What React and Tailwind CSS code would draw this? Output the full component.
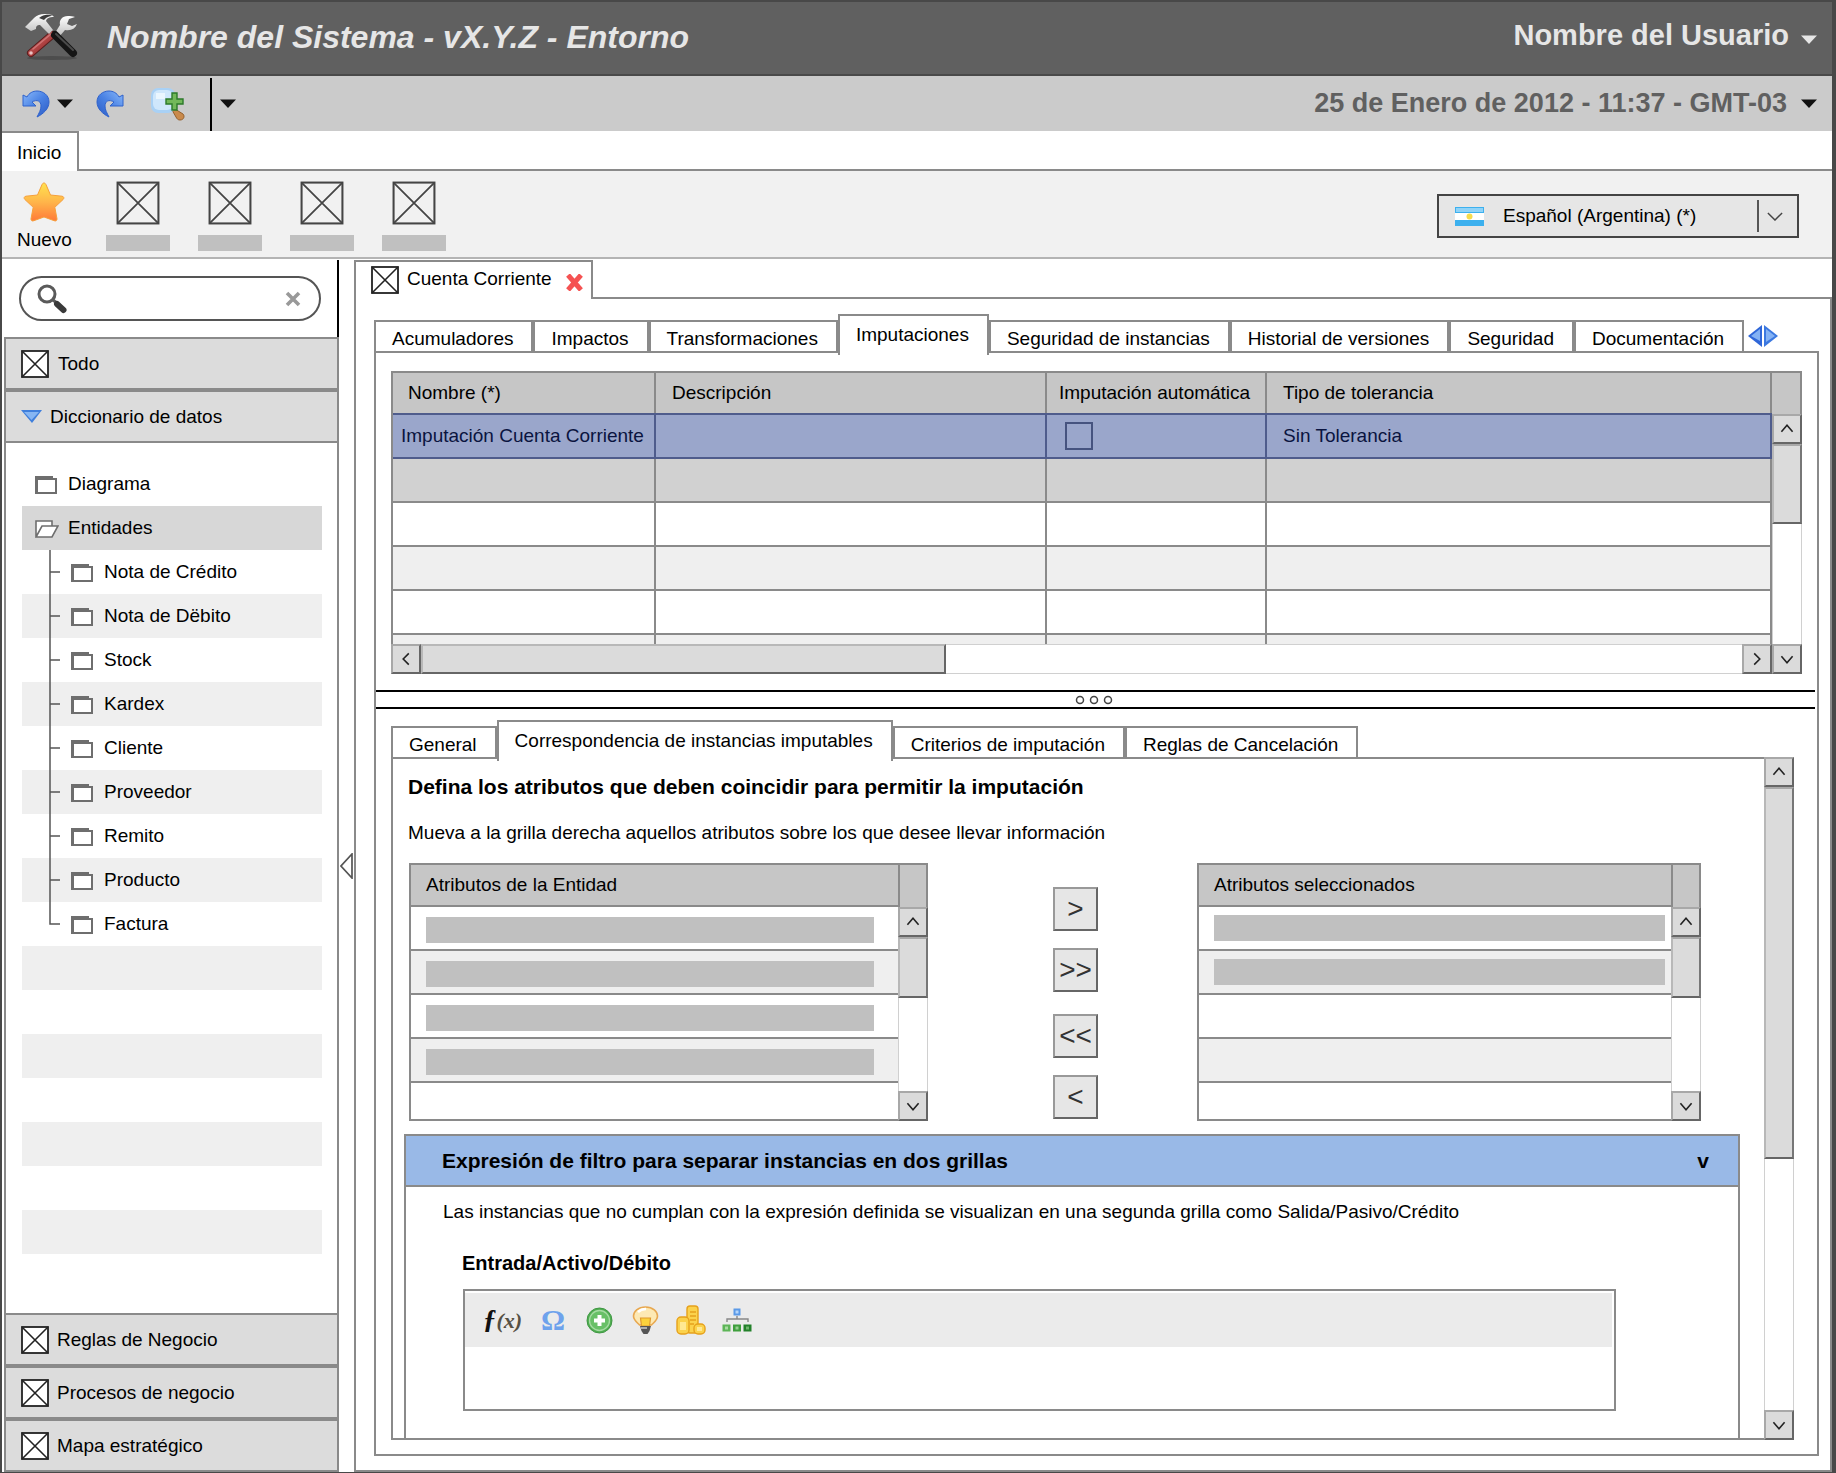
import React from "react";

const LINE = "border-[#8a8a8a]";

function CrossBox({ className = "size-7", stroke = "#222", thin = false }) {
  return (
    <svg className={`${className} shrink-0`} viewBox="0 0 28 28" aria-hidden="true">
      <rect x="1" y="1" width="26" height="26" fill={thin ? "none" : "#fff"} stroke={stroke} strokeWidth={thin ? 1.3 : 1.8} />
      <path d="M1 1 27 27M27 1 1 27" stroke={stroke} strokeWidth={thin ? 1.1 : 1.6} />
    </svg>
  );
}

function Caret({ fill = "#111", className = "" }) {
  return (
    <svg className={`h-[9px] w-4 shrink-0 ${className}`} viewBox="0 0 16 9" aria-hidden="true">
      <path d="M0 .5h16L8 9z" fill={fill} />
    </svg>
  );
}

function ToolsLogo() {
  return (
    <svg className="h-[50px] w-[54px] shrink-0" viewBox="0 0 54 50" aria-hidden="true">
      <defs>
        <linearGradient id="steel" x1="0" y1="0" x2="0" y2="1">
          <stop offset="0" stopColor="#ffffff" />
          <stop offset="1" stopColor="#bdbdbd" />
        </linearGradient>
        <linearGradient id="redGrip" x1="0" y1="0" x2="1" y2="1">
          <stop offset="0" stopColor="#d98080" />
          <stop offset=".5" stopColor="#b04343" />
          <stop offset="1" stopColor="#7c2222" />
        </linearGradient>
      </defs>
      <ellipse cx="27" cy="46" rx="25" ry="2" fill="#4d4d4d" />
      <path d="M43 4c-6 0-9 4-8 9l-5 8 4 4 6-7c6 1 10-1 12-6l-5 2-5-2 2-5 6-2c-2-1-5-1-7-1z" fill="url(#steel)" />
      <path d="M27 23 6 41" stroke="#5a1c1c" strokeWidth="8" strokeLinecap="round" />
      <path d="M27 23 6 41" stroke="url(#redGrip)" strokeWidth="6" strokeLinecap="round" />
      <path d="M26 22 8 37" stroke="#cf7474" strokeWidth="1.500" strokeLinecap="round" />
      <circle cx="6" cy="41" r="1.800" fill="#e9c3c3" />
      <path d="M30 23 48 41" stroke="#151515" strokeWidth="8" strokeLinecap="round" />
      <path d="M31 22 48 38" stroke="#4a4a4a" strokeWidth="2" strokeLinecap="round" />
      <path d="M0 15 9 6c4-4 10-5 18-3l2 2c-5 0-7 1-8 4l7 9-4 4-9-9c-3 0-4 1-4 4l-5 2z" fill="url(#steel)" />
      <path d="M14 6c5-4 9-4 14-2-5 0-7 2-9 4z" fill="#3c3c3c" />
    </svg>
  );
}

function TurnArrow({ flip = false }) {
  return (
    <svg className={`h-7 w-[29px] shrink-0 ${flip ? "-scale-x-100" : ""}`} viewBox="0 0 29 28" aria-hidden="true">
      <defs>
        <linearGradient id="arrowBlue" x1="0" y1="0" x2="1" y2="1">
          <stop offset="0" stopColor="#8ab9fa" />
          <stop offset=".5" stopColor="#4a82e4" />
          <stop offset="1" stopColor="#2c5bc4" />
        </linearGradient>
      </defs>
      <path
        d="M1 5v11h13l-4-4c5-3 9-1 9 4 0 4-2 7-4 11 6-3 12-8 12-15C27 5 21 1 15 1 11 1 7 3 5 7z"
        fill="url(#arrowBlue)"
        stroke="#2f62cc"
        strokeWidth="1"
        strokeLinejoin="round"
      />
    </svg>
  );
}

function ZoomAdd() {
  return (
    <svg className="h-[34px] w-[35px] shrink-0" viewBox="0 0 35 34" aria-hidden="true">
      <path d="M22 23l3-1 8 5c2 2 1 6-3 6-2 0-3-1-4-3z" fill="#c98a4c" stroke="#95602c" strokeWidth="1" />
      <rect x="1" y="1" width="24" height="25" rx="7" fill="#a9d1f5" />
      <rect x="3" y="3" width="20" height="20" rx="6" fill="#cfe7fc" />
      <path d="M6 6h9v6H6z" fill="#eaf6ff" />
      <path d="M22 6h5v6h6v5h-6v6h-5v-6h-6v-5h6z" fill="#72b85a" stroke="#2c7a2a" strokeWidth="1.400" />
    </svg>
  );
}

function StarIcon() {
  return (
    <svg className="h-[42px] w-[42px]" viewBox="0 0 42 42" aria-hidden="true">
      <defs>
        <linearGradient id="starFill" x1="0" y1="0" x2="0" y2="1">
          <stop offset="0" stopColor="#ffe34f" />
          <stop offset=".5" stopColor="#ffb54a" />
          <stop offset="1" stopColor="#ff7a38" />
        </linearGradient>
      </defs>
      <path
        d="M21 2c1 0 1.600.8 2 1.600L27.500 14l11.500 1.200c2 .3 2.400 2 1.100 3.300l-8.300 7.800 2.200 11.500c.2 1.700-1.300 2.700-2.800 1.900L21 36l-10.200 3.700c-1.500.8-3-.2-2.800-1.900l2.200-11.500-8.300-7.800C.6 17.200 1 15.500 3 15.200L14.500 14 19 3.600C19.400 2.800 20 2 21 2z"
        fill="url(#starFill)"
        stroke="#f6a03c"
        strokeWidth="1"
      />
    </svg>
  );
}

function Flag() {
  return (
    <svg className="h-[19px] w-[29px]" viewBox="0 0 29 19" aria-hidden="true">
      <rect width="29" height="19" fill="#3cb0ee" />
      <rect x="1" y="1" width="27" height="4" fill="#8fd3f8" />
      <rect y="6" width="29" height="7" fill="#fff" />
      <circle cx="14.500" cy="9.500" r="3" fill="#f6dc4c" />
    </svg>
  );
}

function FolderIcon() {
  return (
    <svg className="mt-[2px] h-[18px] w-[22px] shrink-0" viewBox="0 0 22 18" aria-hidden="true">
      <path d="M0 0h18v2h4v16H0z" fill="#6e6e6e" />
      <path d="M3 4h17v12H3z" fill="#fff" />
    </svg>
  );
}

function OpenFolderIcon() {
  return (
    <svg className="mt-[2px] h-[18px] w-6 shrink-0" viewBox="0 0 24 18" aria-hidden="true">
      <path d="M1 17V1h16v5M1 17 7 6h16l-6 11z" fill="#fff" stroke="#6e6e6e" strokeWidth="1.600" />
    </svg>
  );
}

function Branch({ last }) {
  return (
    <svg className="h-11 w-3 shrink-0" viewBox="0 0 12 44" aria-hidden="true">
      <path d={last ? "M1 0V22H11" : "M1 0V44M1 22H11"} fill="none" stroke="#555" strokeWidth="1.500" />
    </svg>
  );
}

const CHEVRONS = {
  up: "M9 18l6-7 6 7",
  down: "M9 12l6 7 6-7",
  left: "M18 9l-6 6 6 6",
  right: "M12 9l6 6-6 6",
};

function ScrollButton({ dir, label }) {
  return (
    <button
      type="button"
      aria-label={label}
      className="size-[30px] shrink-0 border-2 border-t-[#a8a8a8] border-l-[#a8a8a8] border-r-[#666] border-b-[#666] bg-[#dbdbdb]"
    >
      <svg className="-m-px size-[28px]" viewBox="0 0 30 30" aria-hidden="true">
        <path d={CHEVRONS[dir]} fill="none" stroke="#222" strokeWidth="1.700" />
      </svg>
    </button>
  );
}

function VScroll({ thumb }) {
  return (
    <div className="flex min-h-0 flex-1 flex-col border-x border-[#d0d0d0] bg-white">
      <div className="-mx-px flex flex-1 flex-col">
        <ScrollButton dir="up" label="Subir" />
        <div className={`${thumb} border-2 border-t-[#a8a8a8] border-l-[#b8b8b8] border-r-[#777] border-b-[#666] bg-[#dbdbdb]`} />
        <div className="flex-1" />
        <ScrollButton dir="down" label="Bajar" />
      </div>
    </div>
  );
}

function Tabs({ items, active, children }) {
  return (
    <div role="tablist" className="relative z-10 flex h-[39px] items-end whitespace-nowrap">
      {items.map((t) => {
        const on = t === active;
        return (
          <button
            key={t}
            type="button"
            role="tab"
            aria-selected={on}
            className={
              on
                ? `-mb-[2px] flex h-[41px] items-start border-2 border-b-0 ${LINE} bg-white pt-[7px] pr-[18px] pl-4`
                : `flex h-[33px] items-end border-2 ${LINE} bg-white pr-[18px] pl-4`
            }
          >
            {t}
          </button>
        );
      })}
      {children}
    </div>
  );
}

const MAIN_TABS = [
  "Acumuladores",
  "Impactos",
  "Transformaciones",
  "Imputaciones",
  "Seguridad de instancias",
  "Historial de versiones",
  "Seguridad",
  "Documentación",
];
const SUB_TABS = ["General", "Correspondencia de instancias imputables", "Criterios de imputación", "Reglas de Cancelación"];
const ENTITIES = ["Nota de Crédito", "Nota de Dëbito", "Stock", "Kardex", "Cliente", "Proveedor", "Remito", "Producto", "Factura"];

function Header() {
  return (
    <header className="flex h-[74px] items-center border-b-2 border-[#4a4a4a] bg-[#606060] pr-[15px] pb-[2px] pl-[23px] text-[#e6e6e6]">
      <ToolsLogo />
      <h1 className="ml-7 text-[32px] leading-9 font-bold italic">Nombre del Sistema - vX.Y.Z - Entorno</h1>
      <button type="button" className="mb-1 ml-auto flex items-center gap-3 text-[29px] leading-8 font-bold">
        Nombre del Usuario
        <Caret fill="#e6e6e6" className="mt-[9px]" />
      </button>
    </header>
  );
}

function QuickBar() {
  return (
    <div className="flex h-[55px] items-center bg-[#cbcbcb] pr-[15px] pl-5">
      <button type="button" aria-label="Deshacer" className="flex items-center gap-[6px]">
        <TurnArrow />
        <Caret />
      </button>
      <button type="button" aria-label="Rehacer" className="ml-[22px]">
        <TurnArrow flip />
      </button>
      <button type="button" aria-label="Buscar" className="ml-[26px]">
        <ZoomAdd />
      </button>
      <div className="ml-[25px] h-[53px] w-[2px] self-end bg-black" />
      <button type="button" aria-label="Más acciones" className="ml-2">
        <Caret />
      </button>
      <button type="button" className="ml-auto flex items-center gap-[14px] pb-[2px] text-[27px] leading-8 font-bold text-[#606060]">
        25 de Enero de 2012 - 11:37 - GMT-03
        <Caret className="mt-[2px]" />
      </button>
    </div>
  );
}

function Ribbon() {
  return (
    <>
      <div className={`flex h-10 items-end border-b-2 ${LINE}`}>
        <button type="button" className={`-mb-[2px] h-10 border-t-2 border-r-2 ${LINE} bg-white pt-px pr-4 pl-[15px]`}>
          Inicio
        </button>
      </div>
      <div className="flex h-[88px] items-center border-b-2 border-[#b4b4b4] bg-[#f1f1f1] pt-1 pr-[33px] pl-[15px]">
        <button type="button" className="flex flex-col items-center gap-[5px]">
          <StarIcon />
          Nuevo
        </button>
        <div className="ml-[34px] flex gap-7">
          {[1, 2, 3, 4].map((n) => (
            <button key={n} type="button" aria-label={`Acción ${n}`} className="flex flex-col items-center gap-[10px]">
              <CrossBox className="size-[44px]" stroke="#444" thin />
              <span className="h-4 w-16 bg-[#c0c0c0]" />
            </button>
          ))}
        </div>
        <div className="relative ml-auto">
          <select
            aria-label="Idioma"
            className="h-11 w-[362px] appearance-none border-2 border-[#444] bg-[#e6e6e6] pl-[64px]"
            defaultValue="es-AR"
          >
            <option value="es-AR">Español (Argentina) (*)</option>
          </select>
          <div className="pointer-events-none absolute inset-0 flex items-center pr-4 pl-[18px]">
            <Flag />
            <span className="ml-auto h-8 w-[2px] bg-[#555]" />
            <svg className="ml-2 h-[9px] w-[16px]" viewBox="0 0 18 10" aria-hidden="true">
              <path d="M1 1l8 8 8-8" fill="none" stroke="#444" strokeWidth="1.600" />
            </svg>
          </div>
        </div>
      </div>
    </>
  );
}

function SideSection({ label, icon, gap }) {
  return (
    <button type="button" className={`flex h-[53px] w-full items-center border-2 ${LINE} bg-[#dcdcdc] pl-[15px] ${gap}`}>
      {icon}
      {label}
    </button>
  );
}

function Sidebar() {
  return (
    <aside className="flex w-[335px] shrink-0 flex-col">
      <div className="flex h-[77px] items-center border-r-2 border-black pr-4 pl-[15px]">
        <label className="flex h-[45px] w-full items-center rounded-full border-2 border-[#555] bg-white px-4">
          <svg className="size-[30px] shrink-0" viewBox="0 0 30 30" aria-hidden="true">
            <circle cx="10" cy="10" r="8" fill="#fff" stroke="#5a5a5a" strokeWidth="3" />
            <path d="M16 16l5 4" stroke="#5a5a5a" strokeWidth="3" />
            <path d="M20 20l6.500 6" stroke="#3a3a3a" strokeWidth="6" strokeLinecap="round" />
          </svg>
          <input aria-label="Buscar" className="min-w-0 flex-1 bg-transparent px-2 outline-none" />
          <svg className="mr-[2px] size-4" viewBox="0 0 16 16" aria-hidden="true">
            <path d="M2 2l12 12M14 2 2 14" stroke="#999" strokeWidth="3.600" />
          </svg>
        </label>
      </div>
      <SideSection label="Todo" icon={<CrossBox />} gap="gap-[9px]" />
      <SideSection
        label="Diccionario de datos"
        gap="gap-2"
        icon={
          <svg className="h-[13px] w-[21px]" viewBox="0 0 21 13" aria-hidden="true">
            <path d="M0 0h21L11 13z" fill="#3f7fdc" />
            <path d="M3 2h15l-7.500 8z" fill="#86b6f3" />
          </svg>
        }
      />
      <nav className={`flex flex-1 flex-col border-x-2 ${LINE} pt-[19px] pr-[15px] pb-3 pl-4`}>
        <ul className="flex-1">
          <li className="flex h-11 items-center pl-[13px]">
            <FolderIcon />
            <a href="#diagrama" className="ml-[11px]">Diagrama</a>
          </li>
          <li>
            <div className="flex h-11 items-center bg-[#d7d7d7] pl-[13px]">
              <OpenFolderIcon />
              <a href="#entidades" className="ml-[9px]">Entidades</a>
            </div>
            <ul>
              {ENTITIES.map((e, i) => (
                <li key={e} className="flex h-11 items-center pl-[27px] even:bg-[#efefef]">
                  <Branch last={i === ENTITIES.length - 1} />
                  <span className="ml-[10px] flex items-center gap-[11px]">
                    <FolderIcon />
                    <a href={`#entidad-${i}`}>{e}</a>
                  </span>
                </li>
              ))}
            </ul>
          </li>
          {[0, 1, 2, 3].map((n) => (
            <li key={n} aria-hidden="true" className="mb-11 h-11 bg-[#efefef]" />
          ))}
        </ul>
      </nav>
      <SideSection label="Reglas de Negocio" icon={<CrossBox />} gap="gap-2" />
      <SideSection label="Procesos de negocio" icon={<CrossBox />} gap="gap-2" />
      <SideSection label="Mapa estratégico" icon={<CrossBox />} gap="gap-2" />
    </aside>
  );
}

function ImputTable() {
  const sel = "h-[46px] border-r-2 border-y-2 border-[#4f5c8c] bg-[#9aa6cb] text-[#0a1440]";
  const rows = ["h-11 bg-[#d1d1d1]", "h-11 bg-white", "h-11 bg-[#efefef]", "h-11 bg-white"];
  return (
    <div className="mx-[15px] mt-[18px]">
      <div className="flex">
        <div className={`min-w-0 flex-1 border-t-2 border-l-2 ${LINE}`}>
          <table className="w-full table-fixed border-separate border-spacing-0 text-left">
            <colgroup>
              <col className="w-[263px]" />
              <col className="w-[391px]" />
              <col className="w-[220px]" />
              <col />
            </colgroup>
            <thead>
              <tr className="h-10 bg-[#c6c6c6]">
                <th scope="col" className={`border-r-2 ${LINE} pl-[15px] font-normal`}>Nombre (*)</th>
                <th scope="col" className={`border-r-2 ${LINE} pl-4 font-normal`}>Descripción</th>
                <th scope="col" className={`border-r-2 ${LINE} pl-3 font-normal whitespace-nowrap`}>Imputación automática</th>
                <th scope="col" className={`border-r-2 ${LINE} pl-4 font-normal`}>Tipo de tolerancia</th>
              </tr>
            </thead>
            <tbody>
              <tr>
                <td className={`${sel} pl-2 whitespace-nowrap`}>Imputación Cuenta Corriente</td>
                <td className={sel} />
                <td className={`${sel} pl-[18px]`}>
                  <input
                    type="checkbox"
                    aria-label="Imputación automática"
                    className="block size-7 appearance-none border-2 border-[#46537f] bg-transparent"
                  />
                </td>
                <td className={`${sel} pl-4`}>Sin Tolerancia</td>
              </tr>
              {rows.map((r, i) => (
                <tr key={i} className={r}>
                  {[0, 1, 2, 3].map((c) => (
                    <td key={c} className={`border-r-2 border-b-2 ${LINE}`} />
                  ))}
                </tr>
              ))}
              <tr className="h-[9px] bg-[#efefef]">
                {[0, 1, 2, 3].map((c) => (
                  <td key={c} className={`border-r-2 ${LINE}`} />
                ))}
              </tr>
            </tbody>
          </table>
        </div>
        <div className="-mb-[30px] flex w-[30px] shrink-0 flex-col">
          <div className={`h-[43px] border-t-2 border-r-2 ${LINE} bg-[#c6c6c6]`} />
          <VScroll thumb="h-[80px]" />
        </div>
      </div>
      <div className="mr-[30px] flex h-[30px] border-y border-[#d0d0d0]">
        <div className="-my-px flex flex-1">
          <ScrollButton dir="left" label="Desplazar a la izquierda" />
          <div className="w-[38%] border-2 border-t-[#b8b8b8] border-l-[#b8b8b8] border-r-[#666] border-b-[#666] bg-[#dbdbdb]" />
          <div className="flex-1" />
          <ScrollButton dir="right" label="Desplazar a la derecha" />
        </div>
      </div>
    </div>
  );
}

function AttrGrid({ title, filled, bar }) {
  return (
    <div className={`flex border-2 border-r-0 ${LINE} bg-white`}>
      <table className="flex-1 border-separate border-spacing-0 text-left">
        <thead>
          <tr className="h-[42px] bg-[#c6c6c6]">
            <th scope="col" className={`w-full border-b-2 ${LINE} pl-[15px] font-normal`}>{title}</th>
          </tr>
        </thead>
        <tbody>
          {[0, 1, 2, 3].map((n) => (
            <tr key={n} className="h-11 even:bg-[#efefef]">
              <td className={`border-b-2 ${LINE} ${bar}`}>{n < filled && <div className="h-[26px] bg-[#c0c0c0]" />}</td>
            </tr>
          ))}
          <tr className="h-9">
            <td />
          </tr>
        </tbody>
      </table>
      <div className="-mb-[2px] flex w-[30px] flex-col">
        <div className={`h-[42px] border-r-2 border-l-2 ${LINE} bg-[#c6c6c6]`} />
        <VScroll thumb="h-[61px]" />
      </div>
    </div>
  );
}

function MoveButton({ children, label }) {
  return (
    <button
      type="button"
      aria-label={label}
      className="h-11 w-[45px] border-2 border-t-[#999] border-l-[#999] border-r-[#666] border-b-[#666] bg-[#e6e6e6] text-[28px] leading-9 text-[#333]"
    >
      {children}
    </button>
  );
}

function FormulaBar() {
  return (
    <div className="mt-[2px] mr-[2px] flex h-[54px] items-center gap-[18px] bg-[#ebebeb] pl-[18px]">
      <button type="button" aria-label="Función" className="w-[38px] text-left font-['Liberation_Serif',serif] text-[27px] leading-8 font-bold whitespace-nowrap text-[#111] italic">
        ƒ<span className="text-[22px] text-[#555044]">(x)</span>
      </button>
      <button type="button" aria-label="Símbolos" className="w-7 font-['Liberation_Serif',serif] text-[30px] leading-8 font-bold text-[#6ea2ec]">
        Ω
      </button>
      <button type="button" aria-label="Agregar" className="flex w-7 justify-center">
        <svg className="size-[27px]" viewBox="0 0 27 27" aria-hidden="true">
          <circle cx="13.500" cy="13.500" r="12.500" fill="#4fae50" stroke="#3f9643" strokeWidth="1" />
          <circle cx="13.500" cy="13.500" r="10" fill="#68c067" stroke="#a5dba2" strokeWidth="1.300" />
          <path d="M11.500 8h4v3.500H19v4h-3.500V19h-4v-3.500H8v-4h3.500z" fill="#fff" />
        </svg>
      </button>
      <button type="button" aria-label="Sugerencias" className="flex w-7 justify-center">
        <svg className="h-[29px] w-[27px]" viewBox="0 0 27 29" aria-hidden="true">
          <path d="M13.500 1C6 1 1.500 5.500 1.500 10c0 4 3 6 6 9h12c3-3 6-5 6-9 0-4.500-4.500-9-12-9z" fill="#fde9b4" stroke="#e8a850" strokeWidth="1.600" />
          <path d="M6 6c2-2 5-3 8-3" stroke="#fff" strokeWidth="2.500" fill="none" />
          <path d="M8.500 12h10l-1 8h-8z" fill="#fbd23c" stroke="#e09a2e" strokeWidth="1.200" />
          <path d="M8 20h11l-1.500 5-2 3h-4l-2-3z" fill="#555" />
          <path d="M9 22h6" stroke="#ccc" strokeWidth="1.500" />
        </svg>
      </button>
      <button type="button" aria-label="Moneda" className="flex w-7 justify-center">
        <svg className="size-[30px] shrink-0" viewBox="0 0 30 30" aria-hidden="true">
          <g fill="#fbd24c" stroke="#e6a11c" strokeWidth="1.400">
            <rect x="11" y="1" width="11" height="27" rx="3" />
            <rect x="1" y="12" width="12" height="17" rx="4" />
            <rect x="18" y="19" width="11" height="10" rx="4" />
          </g>
          <path d="M14 7h6M14 11h6M14 15h6M14 19h4" stroke="#e6a11c" strokeWidth="1.300" />
          <path d="M4 17h6v8H4zM21 22h5v4h-5z" fill="#ffe893" />
        </svg>
      </button>
      <button type="button" aria-label="Jerarquía" className="flex w-7 justify-center">
        <svg className="h-6 w-[30px] shrink-0" viewBox="0 0 30 24" aria-hidden="true">
          <path d="M5 14v-3h21v3M15 8v3" fill="none" stroke="#888" strokeWidth="1.400" />
          <rect x="11.500" y=".5" width="7" height="7" fill="#5b9ae8" />
          <rect x="13.500" y="2.500" width="3" height="3" fill="#b5d5fa" />
          <rect x=".5" y="16.500" width="8" height="7" fill="#5db557" />
          <rect x="3" y="18.500" width="3" height="3" fill="#a9dba2" />
          <rect x="11" y="16.500" width="8" height="7" fill="#3f9f3d" />
          <rect x="13.500" y="18.500" width="3" height="3" fill="#97cf92" />
          <rect x="21.500" y="16.500" width="8" height="7" fill="#23812a" />
          <rect x="24" y="18.500" width="3" height="3" fill="#6fb56c" />
        </svg>
      </button>
    </div>
  );
}

function FilterSection() {
  return (
    <section className={`mt-[13px] mr-6 ml-[11px] flex flex-1 flex-col border-2 border-b-0 ${LINE}`}>
      <button
        type="button"
        aria-expanded="true"
        className={`flex h-[51px] items-center justify-between border-b-2 ${LINE} bg-[#99b9e7] pr-[29px] pl-9 text-[21px] font-bold`}
      >
        <span>Expresión de filtro para separar instancias en dos grillas</span>
        <span>v</span>
      </button>
      <p className="mt-[13px] ml-[37px]">
        Las instancias que no cumplan con la expresión definida se visualizan en una segunda grilla como Salida/Pasivo/Crédito
      </p>
      <label htmlFor="entrada" className="mt-[27px] ml-14 text-[20px] font-bold">
        Entrada/Activo/Débito
      </label>
      <div className={`mt-[14px] mr-[122px] mb-[27px] ml-[57px] flex flex-1 flex-col border-2 ${LINE}`}>
        <FormulaBar />
        <textarea id="entrada" rows={2} className="block min-h-[62px] w-full flex-1 resize-none px-4 outline-none" />
      </div>
    </section>
  );
}

function DetailPanel() {
  return (
    <div className={`-mt-[2px] flex flex-1 border-2 border-r-0 ${LINE}`}>
      <div className="flex min-w-0 flex-1 flex-col">
        <h2 className="mt-4 ml-[15px] text-[21px] leading-6 font-bold">
          Defina los atributos que deben coincidir para permitir la imputación
        </h2>
        <p className="mt-[22px] ml-[15px]">Mueva a la grilla derecha aquellos atributos sobre los que desee llevar información</p>
        <div className="mt-[18px] mr-[63px] ml-4 grid grid-cols-[519fr_269px_504fr]">
          <AttrGrid title="Atributos de la Entidad" filled={4} bar="pt-[3px] pr-6 pl-[15px]" />
          <div className="mt-6 ml-[125px] flex w-[45px] flex-col gap-[22px]">
            <div className="flex flex-col gap-[17px]">
              <MoveButton label="Agregar">&gt;</MoveButton>
              <MoveButton label="Agregar todos">&gt;&gt;</MoveButton>
            </div>
            <div className="flex flex-col gap-[17px]">
              <MoveButton label="Quitar todos">&lt;&lt;</MoveButton>
              <MoveButton label="Quitar">&lt;</MoveButton>
            </div>
          </div>
          <AttrGrid title="Atributos seleccionados" filled={2} bar="pr-[6px] pl-[15px]" />
        </div>
        <FilterSection />
      </div>
      <div className="-my-[2px] flex w-[30px] shrink-0 flex-col">
        <VScroll thumb="h-[372px]" />
      </div>
    </div>
  );
}

function Workspace() {
  return (
    <main className="flex min-w-0 flex-1 flex-col">
      <div className={`relative z-10 flex h-[39px] w-[239px] items-start gap-2 border-2 border-b-0 ${LINE} bg-white pt-1 pl-[15px]`}>
        <CrossBox />
        <span className="pt-px">Cuenta Corriente</span>
        <button type="button" aria-label="Cerrar" className="mt-2 ml-[6px]">
          <svg className="size-[17px]" viewBox="0 0 17 17" aria-hidden="true">
            <path d="M2 1l13 15M15 1 2 16" stroke="#f55252" strokeWidth="5" />
          </svg>
        </button>
      </div>
      <div className={`-mt-[2px] flex flex-1 flex-col border-2 ${LINE} pt-[15px] pr-[11px] pb-[14px] pl-[18px]`}>
        <Tabs items={MAIN_TABS} active="Imputaciones">
          <div className="mb-[6px] ml-1 flex gap-[2px]">
            <button type="button" aria-label="Pestañas anteriores">
              <svg className="h-[22px] w-[14px]" viewBox="0 0 14 22" aria-hidden="true">
                <path d="M14 0v22L0 11z" fill="#2f66d8" />
                <path d="M12 4v12L3 11z" fill="#84b2f4" />
              </svg>
            </button>
            <button type="button" aria-label="Pestañas siguientes">
              <svg className="h-[22px] w-[14px]" viewBox="0 0 14 22" aria-hidden="true">
                <path d="M0 0v22l14-11z" fill="#3b78e0" />
                <path d="M2 4v13l9-6z" fill="#84b2f4" />
              </svg>
            </button>
          </div>
        </Tabs>
        <div className={`-mt-[2px] flex flex-1 flex-col border-2 ${LINE}`}>
          <ImputTable />
          <div role="separator" className="mt-4 mr-[2px] flex h-[19px] items-center justify-center border-y-2 border-black">
            <svg className="mr-1 h-[10px] w-[38px]" viewBox="0 0 38 10" aria-hidden="true">
              <g fill="none" stroke="#444" strokeWidth="1.500">
                <circle cx="5" cy="5" r="3.500" />
                <circle cx="19" cy="5" r="3.500" />
                <circle cx="33" cy="5" r="3.500" />
              </g>
            </svg>
          </div>
          <div className="mt-[11px] mr-[23px] mb-[14px] ml-[15px] flex flex-1 flex-col">
            <Tabs items={SUB_TABS} active="Correspondencia de instancias imputables" />
            <DetailPanel />
          </div>
        </div>
      </div>
    </main>
  );
}

export default function App() {
  return (
    <div className="flex min-h-screen flex-col border-2 border-r-4 border-[#484848] bg-white font-['Liberation_Sans',Arial,sans-serif] text-[19px] leading-6 text-black">
      <Header />
      <QuickBar />
      <Ribbon />
      <div className="flex flex-1 pt-px pl-[2px]">
        <Sidebar />
        <button type="button" aria-label="Contraer panel" className="flex w-[15px] shrink-0 items-center justify-center">
          <svg className="h-[26px] w-[13px]" viewBox="0 0 13 26" aria-hidden="true">
            <path d="M12 1v24L1 13z" fill="#fff" stroke="#555" strokeWidth="1.700" />
          </svg>
        </button>
        <Workspace />
      </div>
    </div>
  );
}
